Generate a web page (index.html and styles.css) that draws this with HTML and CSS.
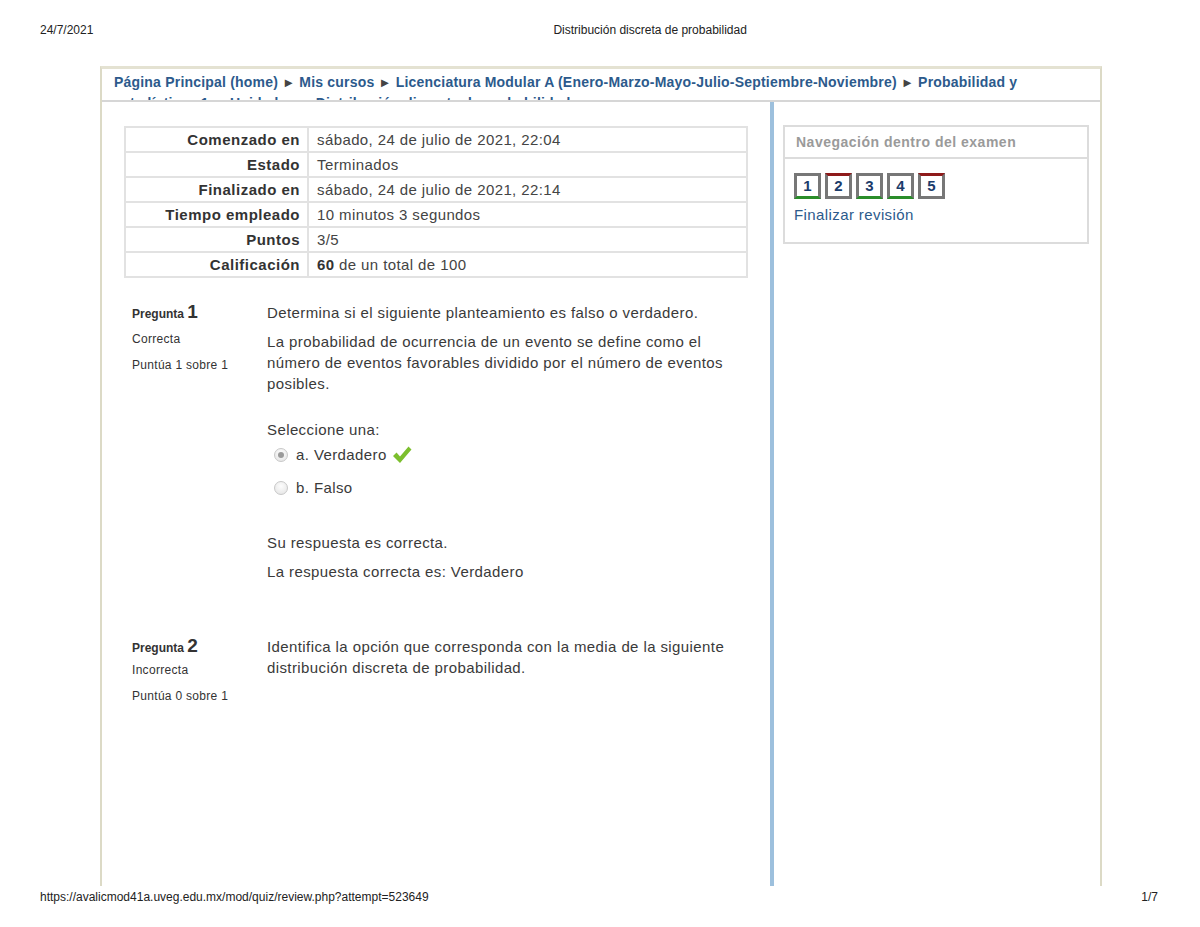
FILE: index.html
```html
<!DOCTYPE html>
<html lang="es">
<head>
  <meta charset="UTF-8" />
  <title>Distribución discreta de probabilidad</title>
  <link rel="stylesheet" href="styles.css">
</head>
<body>
  <!-- print header -->
  <header class="print-head">
    <span>24/7/2021</span>
    <span class="doc-title">Distribución discreta de probabilidad</span>
  </header>

  <div class="page">
    <div class="navbar">
      <nav class="breadcrumb">
        <a href="#">Página Principal (home)</a> <span class="sep">►</span>
        <a href="#">Mis cursos</a> <span class="sep">►</span>
        <a href="#">Licenciatura Modular A (Enero-Marzo-Mayo-Julio-Septiembre-Noviembre)</a> <span class="sep">►</span>
        <a href="#">Probabilidad y estadística v1</a> <span class="sep">►</span>
        <a href="#">Unidades</a> <span class="sep">►</span>
        <a href="#">Distribución discreta de probabilidad</a>
      </nav>
    </div>

    <div class="layout">
      <main class="region-main">
        <table class="summary">
          <tr><th>Comenzado en</th><td>sábado, 24 de julio de 2021, 22:04</td></tr>
          <tr><th>Estado</th><td>Terminados</td></tr>
          <tr><th>Finalizado en</th><td>sábado, 24 de julio de 2021, 22:14</td></tr>
          <tr><th>Tiempo empleado</th><td>10 minutos 3 segundos</td></tr>
          <tr><th>Puntos</th><td>3/5</td></tr>
          <tr><th>Calificación</th><td><b>60</b> de un total de 100</td></tr>
        </table>

        <!-- question 1 -->
        <div class="que">
          <div class="info">
            <div class="qno">Pregunta <span class="num">1</span></div>
            <div class="state">Correcta</div>
            <div class="grade">Puntúa 1 sobre 1</div>
          </div>
          <div class="content">
            <p class="qtext">Determina si el siguiente planteamiento es falso o verdadero.</p>
            <p class="qtext">La probabilidad de ocurrencia de un evento se define como el número de eventos favorables dividido por el número de eventos posibles.</p>
            <p class="prompt">Seleccione una:</p>
            <div class="answer">
              <div class="option">
                <span class="radio checked"></span>
                <span>a. Verdadero</span>
                <svg class="tick" width="20" height="20" viewBox="0 0 20 20">
                  <path d="M1 11 L4.5 7.5 L8 11.5 L16.5 1.5 L19.5 4.5 L8 18 Z" fill="#7cbf2e"/>
                </svg>
              </div>
              <div class="option">
                <span class="radio"></span>
                <span>b. Falso</span>
              </div>
            </div>
            <p class="feedback">Su respuesta es correcta.</p>
            <p class="rightanswer">La respuesta correcta es: Verdadero</p>
          </div>
        </div>

        <!-- question 2 -->
        <div class="que que-next">
          <div class="info">
            <div class="qno">Pregunta <span class="num">2</span></div>
            <div class="state state-tight">Incorrecta</div>
            <div class="grade">Puntúa 0 sobre 1</div>
          </div>
          <div class="content">
            <p class="qtext qtext-tight">Identifica la opción que corresponda con la media de la siguiente distribución discreta de probabilidad.</p>
          </div>
        </div>
      </main>

      <aside class="block-col">
        <div class="block">
          <div class="block-head">Navegación dentro del examen</div>
          <div class="block-body">
            <div class="qn-buttons">
              <a class="qn correct" href="#">1</a>
              <a class="qn incorrect" href="#">2</a>
              <a class="qn correct" href="#">3</a>
              <a class="qn correct" href="#">4</a>
              <a class="qn incorrect" href="#">5</a>
            </div>
            <a class="finish" href="#">Finalizar revisión</a>
          </div>
        </div>
      </aside>
    </div>
  </div>

  <!-- print footer -->
  <footer class="print-foot">
    <span>https://avalicmod41a.uveg.edu.mx/mod/quiz/review.php?attempt=523649</span>
    <span>1/7</span>
  </footer>
</body>
</html>
```

FILE: styles.css
```css
body {
  margin: 0;
  background: #fff;
  font-family: "Liberation Sans", Arial, sans-serif;
  color: #333;
}

a {
  text-decoration: none;
}

.print-head {
  height: 66px;
  box-sizing: border-box;
  padding: 23px 0 0 40px;
  display: flex;
  font-size: 12px;
  line-height: 14px;
  color: #222;
}

.doc-title {
  margin-left: 460px;
}

.page {
  margin-left: 100px;
  width: 1002px;
  height: 820px;
  box-sizing: border-box;
  border-top: 3px solid #e4e2d2;
  border-left: 2px solid #dcdac6;
  border-right: 2px solid #dcdac6;
  display: flex;
  flex-direction: column;
}

/* the crumb trail is clipped to one line and a bit */
.navbar {
  height: 31px;
  border-bottom: 2px solid #d6d6d6;
  overflow: hidden;
}

.breadcrumb {
  padding: 3px 60px 0 12px;
  font-size: 14px;
  font-weight: bold;
  line-height: 20px;
  letter-spacing: 0.2px;
}

.breadcrumb a {
  color: #2c5a8c;
}

.breadcrumb .sep {
  color: #444;
  font-size: 13px;
}

.layout {
  flex: 1;
  display: flex;
}

.region-main {
  width: 672px;
  box-sizing: border-box;
  padding: 24px 0 0 22px;
  border-right: 4px solid #9dc0dd;
}

.summary {
  width: 624px;
  border-collapse: collapse;
  font-size: 15px;
  letter-spacing: 0.4px;
}

.summary th,
.summary td {
  border: 2px solid #e2e2e2;
  height: 23px;
  line-height: 23px;
  padding: 0 0 0 8px;
}

.summary td {
  color: #444;
}

.summary td b {
  color: #333;
}

.summary th {
  width: 174px;
  text-align: right;
  padding: 0 7px 0 0;
  letter-spacing: 0.5px;
  color: #333;
}

.que {
  display: flex;
  margin: 24px 0 0 8px;
}

.que-next {
  margin-top: 54px;
}

.info {
  width: 135px;
  flex-shrink: 0;
  font-size: 12px;
  letter-spacing: 0.3px;
}

.qno {
  line-height: 20px;
  font-weight: bold;
  letter-spacing: 0;
}

.qno .num {
  font-size: 19px;
}

.state {
  margin-top: 5px;
  line-height: 20px;
}

.state-tight {
  margin-top: 2px;
}

.grade {
  margin-top: 6px;
  line-height: 20px;
}

.content {
  width: 470px;
  font-size: 15px;
  letter-spacing: 0.4px;
  line-height: 21px;
  color: #3a3a3a;
}

.content p {
  margin: 0;
}

.qtext + .qtext {
  margin-top: 8px;
}

.prompt {
  margin-top: 25px !important;
}

.answer {
  padding-left: 7px;
}

.option {
  display: flex;
  align-items: center;
  height: 21px;
  margin-top: 4px;
}

.option + .option {
  margin-top: 12px;
}

.radio {
  width: 12px;
  height: 12px;
  border-radius: 50%;
  border: 1px solid #c8c8c8;
  background: radial-gradient(circle at 50% 35%, #fdfdfd, #e2e2e2);
  margin-right: 8px;
  position: relative;
}

.radio.checked::after {
  content: "";
  position: absolute;
  left: 3px;
  top: 3px;
  width: 6px;
  height: 6px;
  border-radius: 50%;
  background: #9a9a9a;
}

.tick {
  margin-left: 5px;
}

.feedback {
  margin-top: 34px !important;
}

.rightanswer {
  margin-top: 8px !important;
}

.block-col {
  flex: 1;
  padding: 23px 0 0 9px;
}

.block {
  width: 306px;
  box-sizing: border-box;
  border: 2px solid #dcdcdc;
}

.block-head {
  height: 30px;
  line-height: 30px;
  padding-left: 11px;
  font-size: 14px;
  font-weight: bold;
  letter-spacing: 0.5px;
  color: #9a9a9a;
  border-bottom: 2px solid #dcdcdc;
}

.block-body {
  padding: 14px 9px 17px;
}

.qn-buttons {
  display: flex;
  gap: 4px;
}

.qn {
  width: 21px;
  height: 20px;
  border: 3px solid #777;
  background: #fff;
  color: #1b3c6b;
  font-size: 15px;
  font-weight: bold;
  text-align: center;
  line-height: 20px;
}

.qn.correct {
  border-bottom-color: #2a8d2a;
}

.qn.incorrect {
  border-top-color: #8e1a1a;
}

.finish {
  display: block;
  margin-top: 6px;
  line-height: 20px;
  font-size: 15px;
  letter-spacing: 0.4px;
  color: #2c5a8c;
}

.print-foot {
  display: flex;
  justify-content: space-between;
  padding: 4px 42px 0 40px;
  font-size: 12px;
  line-height: 14px;
  color: #222;
}
```
